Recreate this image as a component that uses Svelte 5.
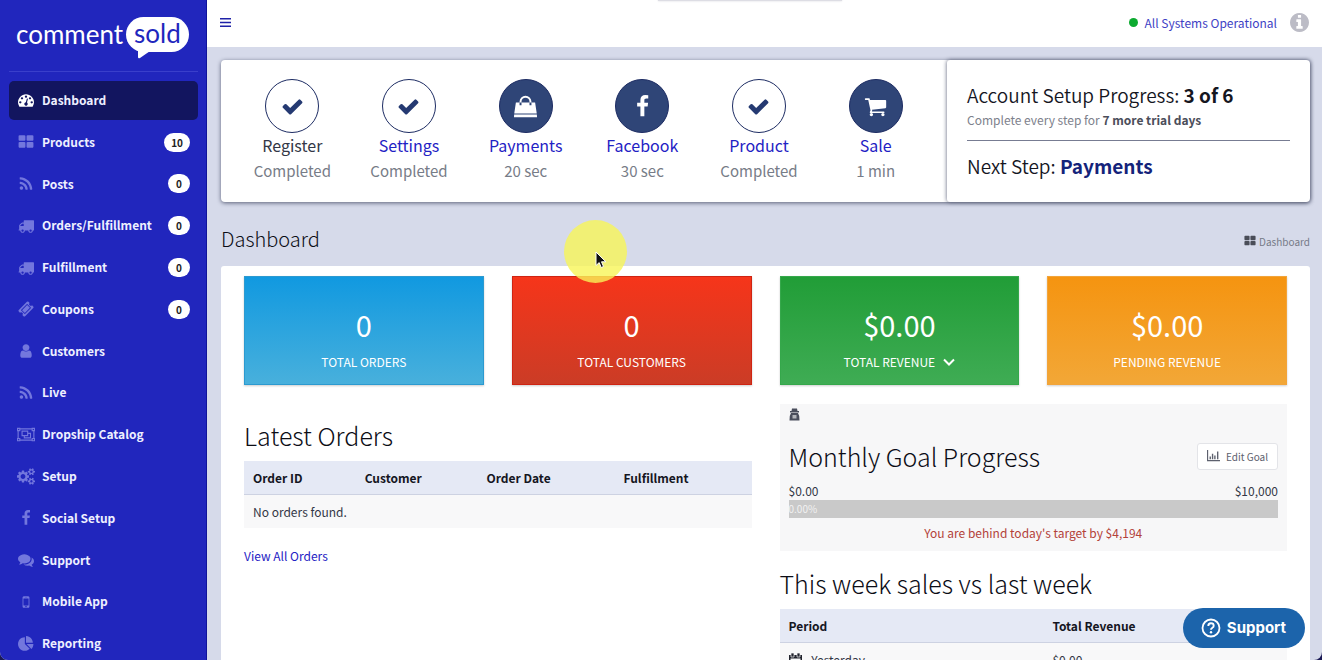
<script>
  const thLarge =
    'M832 1024v384q0 52-38 90t-90 38h-512q-52 0-90-38t-38-90v-384q0-52 38-90t90-38h512q52 0 90 38t38 90zm0-768v384q0 52-38 90t-90 38h-512q-52 0-90-38t-38-90v-384q0-52 38-90t90-38h512q52 0 90 38t38 90zm896 768v384q0 52-38 90t-90 38h-512q-52 0-90-38t-38-90v-384q0-52 38-90t90-38h512q52 0 90 38t38 90zm0-768v384q0 52-38 90t-90 38h-512q-52 0-90-38t-38-90v-384q0-52 38-90t90-38h512q52 0 90 38t38 90z';
  const rss =
    'M576 1344q0 80-56 136t-136 56-136-56-56-136 56-136 136-56 136 56 56 136zm512 123q2 28-17 48-18 21-47 21h-135q-25 0-43-16.5t-20-41.5q-22-229-184.5-391.5t-391.5-184.5q-25-2-41.5-20t-16.5-43v-135q0-29 21-47 17-17 43-17h5q160 13 306 80.5t259 181.5q114 113 181.5 259t80.5 306zm512 2q2 27-18 47-18 20-46 20h-143q-26 0-44.5-17.5t-19.5-42.5q-12-215-101-408.5t-231.5-336-336-231.5-408.5-102q-25-1-42.5-19.5t-17.5-43.5v-143q0-28 20-46 18-18 44-18h3q262 13 501.5 120t425.5 294q187 186 294 425.5t120 501.5z';
  const truck =
    'M640 1408q0-52-38-90t-90-38-90 38-38 90 38 90 90 38 90-38 38-90zm-384-512h384v-256h-158q-13 0-22 9l-195 195q-9 9-9 22v30zm1280 512q0-52-38-90t-90-38-90 38-38 90 38 90 90 38 90-38 38-90zm256-1088v1024q0 15-4 26.5t-13.5 18.5-16.5 11.5-23.5 6-22.5 2-25.5 0-22.5-.5q0 106-75 181t-181 75-181-75-75-181h-384q0 106-75 181t-181 75-181-75-75-181h-64q-3 0-22.5.5t-25.5 0-22.5-2-23.5-6-16.5-11.5-13.5-18.5-4-26.5q0-26 19-45t45-19v-320q0-8-.5-35t0-38 2.5-34.5 6.5-37 14-30.5 22.5-30l198-198q19-19 50.5-32t58.5-13h160v-192q0-26 19-45t45-19h1024q26 0 45 19t19 45z';
  const gauge =
    'M384 1152q0-53-37.5-90.5t-90.5-37.5-90.5 37.5-37.5 90.5 37.5 90.5 90.5 37.5 90.5-37.5 37.5-90.5zm192-448q0-53-37.5-90.5t-90.5-37.5-90.5 37.5-37.5 90.5 37.5 90.5 90.5 37.5 90.5-37.5 37.5-90.5zm428 481l101-382q6-26-7.5-48.5t-38.5-29.5-48 6.5-30 39.5l-101 382q-60 5-107 43.5t-63 98.5q-20 77 20 146t117 89 146-20 89-117q16-60-6-117t-72-91zm660-33q0-53-37.5-90.5t-90.5-37.5-90.5 37.5-37.5 90.5 37.5 90.5 90.5 37.5 90.5-37.5 37.5-90.5zm-640-640q0-53-37.5-90.5t-90.5-37.5-90.5 37.5-37.5 90.5 37.5 90.5 90.5 37.5 90.5-37.5 37.5-90.5zm448 192q0-53-37.5-90.5t-90.5-37.5-90.5 37.5-37.5 90.5 37.5 90.5 90.5 37.5 90.5-37.5 37.5-90.5zm320 448q0 261-141 483-19 29-54 29h-1402q-35 0-54-29-141-221-141-483 0-182 71-348t191-286 286-191 348-71 348 71 286 191 191 286 71 348z';
  const ticket =
    'M1024 452l316 316-572 572-316-316zm-211 979l618-618q19-19 19-45t-19-45l-362-362q-18-18-45-18t-45 18l-618 618q-19 19-19 45t19 45l362 362q18 18 45 18t45-18zm889-637l-907 908q-37 37-90.5 37t-90.5-37l-126-126q56-56 56-136t-56-136-136-56-136 56l-125-126q-37-37-37-90.5t37-90.5l907-906q37-37 90.5-37t90.5 37l125 125q-56 56-56 136t56 136 136 56 136-56l126 125q37 37 37 90.5t-37 90.5z';
  const user =
    'M1536 1399q0 109-62.5 187t-150.5 78h-854q-88 0-150.5-78t-62.5-187q0-85 8.5-160.5t31.5-152 58.5-131 94-89 134.5-34.5q131 128 313 128t313-128q76 0 134.5 34.5t94 89 58.5 131 31.5 152 8.5 160.5zm-256-887q0 159-112.5 271.5t-271.5 112.5-271.5-112.5-112.5-271.5 112.5-271.5 271.5-112.5 271.5 112.5 112.5 271.5z';
  const cogs =
    'M896 896q0-106-75-181t-181-75-181 75-75 181 75 181 181 75 181-75 75-181zm768 512q0-52-38-90t-90-38-90 38-38 90q0 53 37.5 90.5t90.5 37.5 90.5-37.5 37.5-90.5zm0-1024q0-52-38-90t-90-38-90 38-38 90q0 53 37.5 90.5t90.5 37.5 90.5-37.5 37.5-90.5zm-384 421v185q0 10-7 19.5t-16 10.5l-155 24q-11 35-32 76 34 48 90 115 7 11 7 20 0 12-7 19-23 30-82.5 89.5t-78.5 59.5q-11 0-21-7l-115-90q-37 19-77 31-11 108-23 155-7 24-30 24h-186q-11 0-20-7.5t-10-17.5l-23-153q-34-10-75-31l-118 89q-7 7-20 7-11 0-21-8-144-133-144-160 0-9 7-19 10-14 41-53t47-61q-23-44-35-82l-152-24q-10-1-17-9.5t-7-19.5v-185q0-10 7-19.5t16-10.5l155-24q11-35 32-76-34-48-90-115-7-11-7-20 0-12 7-20 22-30 82-89t79-59q11 0 21 7l115 90q34-18 77-32 11-108 23-154 7-24 30-24h186q11 0 20 7.5t10 17.5l23 153q34 10 75 31l118-89q8-7 20-7 11 0 21 8 144 133 144 160 0 8-7 19-12 16-42 54t-45 60q23 48 34 82l152 23q10 2 17 10.5t7 19.5zm640 533v140q0 16-149 31-12 27-30 52 51 113 51 138 0 4-4 7-122 71-124 71-8 0-46-47t-52-68q-20 2-30 2t-30-2q-14 21-52 68t-46 47q-2 0-124-71-4-3-4-7 0-25 51-138-18-25-30-52-149-15-149-31v-140q0-16 149-31 13-29 30-52-51-113-51-138 0-4 4-7 4-2 35-20t59-34 30-16q8 0 46 46.5t52 67.5q20-2 30-2t30 2q51-71 92-112l6-2q4 0 124 70 4 3 4 7 0 25-51 138 17 23 30 52 149 15 149 31zm0-1024v140q0 16-149 31-12 27-30 52 51 113 51 138 0 4-4 7-122 71-124 71-8 0-46-47t-52-68q-20 2-30 2t-30-2q-14 21-52 68t-46 47q-2 0-124-71-4-3-4-7 0-25 51-138-18-25-30-52-149-15-149-31v-140q0-16 149-31 13-29 30-52-51-113-51-138 0-4 4-7 4-2 35-20t59-34 30-16q8 0 46 46.5t52 67.5q20-2 30-2t30 2q51-71 92-112l6-2q4 0 124 70 4 3 4 7 0 25-51 138 17 23 30 52 149 15 149 31z';
  const facebook =
    'M1343 12v264h-157q-86 0-116 36t-30 108v189h293l-39 296h-254v759h-306v-759h-255v-296h255v-218q0-186 104-288.5t277-102.5q147 0 228 12z';
  const comments =
    'M1408 768q0 139-94 257t-256.5 186.5-353.5 68.5q-86 0-176-16-124 88-278 128-36 9-86 16h-3q-11 0-20.5-8t-11.5-21q-1-3-1-6.5t.5-6.5 2-6l2.5-5 3.5-5.5 4-5 4.5-5 4-4.5q5-6 23-25t26-29.5 22.5-29 25-38.5 20.5-44q-124-72-195-177t-71-224q0-139 94-257t256.5-186.5 353.5-68.5 353.5 68.5 256.5 186.5 94 257zm384 256q0 120-71 224.5t-195 176.5q10 24 20.5 44t25 38.5 22.5 29 26 29.5 23 25q1 1 4 4.5t4.5 5 4 5 3.5 5.5l2.5 5 2 6 .5 6.5-1 6.5q-3 14-13 22t-22 7q-50-7-86-16-154-40-278-128-90 16-176 16-271 0-472-132 58 4 88 4 161 0 309-45t264-129q125-92 192-212t67-254q0-77-23-152 129 71 204 178t75 230z';
  const mobile =
    'M976 1408q0-33-23.500-56.500t-56.500-23.500-56.500 23.500-23.500 56.500 23.500 56.500 56.500 23.500 56.500-23.500 23.500-56.500zm208-160v-704q0-13-9.500-22.500t-22.500-9.500h-512q-13 0-22.500 9.500t-9.500 22.500v704q0 13 9.500 22.500t22.500 9.500h512q13 0 22.500-9.500t9.500-22.500zm-192-848q0-16-16-16h-160q-16 0-16 16t16 16h160q16 0 16-16zm288-16v1024q0 52-38 90t-90 38h-512q-52 0-90-38t-38-90v-1024q0-52 38-90t90-38h512q52 0 90 38t38 90z';
  const pie =
    'M768 890l546 546q-106 108-247.500 168t-298.500 60q-209 0-385.500-103t-279.500-279.500-103-385.500 103-385.500 279.500-279.500 385.500-103v762zm187 6h773q0 157-60 298.500t-168 247.500zm709-128h-768v-768q209 0 385.500 103t279.500 279.500 103 385.500z';
  const group =
    'M0 128h384v64h1280v-64h384v384h-64v768h64v384h-384v-64h-1280v64h-384v-384h64v-768h-64zM128 256v128h128v-128zM1792 256v128h128v-128zM128 1408v128h128v-128zM1792 1408v128h128v-128zM384 320v192h-192v768h192v192h1280v-192h192v-768h-192v-192zM512 448h768v256h320v640h-832v-256h-256zM640 576v384h512v-384zM1280 832v256h-384v128h576v-384z';
  const check =
    'M1671 566q0 40-28 68l-724 724-136 136q-28 28-68 28t-68-28l-136-136-362-362q-28-28-28-68t28-68l136-136q28-28 68-28t68 28l294 295 656-657q28-28 68-28t68 28l136 136q28 28 28 68z';
  const cart =
    'M704 1536q0 52-38 90t-90 38-90-38-38-90 38-90 90-38 90 38 38 90zm896 0q0 52-38 90t-90 38-90-38-38-90 38-90 90-38 90 38 38 90zm128-1088v512q0 24-16.500 42.500t-40.500 21.500l-1044 122q13 60 13 70 0 16-24 64h920q26 0 45 19t19 45-19 45-45 19h-1024q-26 0-45-19t-19-45q0-11 8-31.500t16-36 21.500-40 15.500-29.500l-177-823h-204q-26 0-45-19t-19-45 19-45 45-19h256q16 0 28.500 6.500t19.500 15.500 13 24.500 8 26 5.500 29.500 4.500 26h1201q26 0 45 19t19 45z';
  const bag =
    'M256 640h1280l110 730h-1500zM140 1430h1512l12 190h-1536zM500 820v-240q0-160 116-278t280-118 280 118 116 278v240h-130v-240q0-110-78-190t-188-80-188 80-78 190v240z';
  const info =
    'M1152 1376v-160q0-14-9-23t-23-9h-96v-512q0-14-9-23t-23-9h-320q-14 0-23 9t-9 23v160q0 14 9 23t23 9h96v320h-96q-14 0-23 9t-9 23v160q0 14 9 23t23 9h448q14 0 23-9t9-23zm-128-896v-160q0-14-9-23t-23-9h-192q-14 0-23 9t-9 23v160q0 14 9 23t23 9h192q14 0 23-9t9-23zm640 416q0 209-103 385.500t-279.500 279.500-385.500 103-385.500-103-279.500-279.500-103-385.500 103-385.500 279.500-279.500 385.500-103 385.500 103 279.500 279.500 103 385.500z';

  const nav = [
    { label: 'Dashboard', icon: gauge, active: true },
    { label: 'Products', icon: thLarge, count: 10 },
    { label: 'Posts', icon: rss, count: 0 },
    { label: 'Orders/Fulfillment', icon: truck, count: 0 },
    { label: 'Fulfillment', icon: truck, count: 0 },
    { label: 'Coupons', icon: ticket, count: 0 },
    { label: 'Customers', icon: user },
    { label: 'Live', icon: rss },
    { label: 'Dropship Catalog', icon: group, box: '0 0 2048 1792', wide: true },
    { label: 'Setup', icon: cogs, box: '0 0 1920 1792', wide: true },
    { label: 'Social Setup', icon: facebook },
    { label: 'Support', icon: comments },
    { label: 'Mobile App', icon: mobile },
    { label: 'Reporting', icon: pie }
  ];

  const steps = [
    { name: 'Register', note: 'Completed', icon: check, done: true, plain: true },
    { name: 'Settings', note: 'Completed', icon: check, done: true },
    { name: 'Payments', note: '20 sec', icon: bag, box: '130 160 1532 1480' },
    { name: 'Facebook', note: '30 sec', icon: facebook },
    { name: 'Product', note: 'Completed', icon: check, done: true },
    { name: 'Sale', note: '1 min', icon: cart }
  ];

  const stats = [
    { value: '0', label: 'TOTAL ORDERS', tone: 'blue' },
    { value: '0', label: 'TOTAL CUSTOMERS', tone: 'red' },
    { value: '$0.00', label: 'TOTAL REVENUE', tone: 'green', menu: true },
    { value: '$0.00', label: 'PENDING REVENUE', tone: 'orange' }
  ];
</script>

{#snippet icon(path, box = '0 0 1792 1792')}
  <svg viewBox={box} fill="currentColor" fill-rule="evenodd" aria-hidden="true"><path d={path} /></svg>
{/snippet}

<div class="app">
  <aside>
    <a class="logo" href="#home">
      <span>comment</span>
      <span class="bubble">sold
        <svg viewBox="0 0 16 10" aria-hidden="true"><path d="M1 0v8q0 2 2 1L16 0z" fill="#fff" /></svg>
      </span>
    </a>
    <nav>
      {#each nav as item}
        <a href="#nav" class:active={item.active}>
          <span class="ico" class:wide={item.wide}>{@render icon(item.icon, item.box)}</span>
          <span class="label">{item.label}</span>
          {#if item.count !== undefined}<span class="count">{item.count}</span>{/if}
        </a>
      {/each}
    </nav>
  </aside>

  <div class="page">
    <header>
      <button class="burger" aria-label="Menu">
        <svg viewBox="0 0 11 9" aria-hidden="true"><path d="M0 .75h11M0 4.500h11M0 8.250h11" stroke="currentColor" stroke-width="1.500" /></svg>
      </button>
      <a class="status" href="#status"><i></i>All Systems Operational</a>
      <button class="info" aria-label="Information">{@render icon(info, '128 128 1536 1536')}</button>
    </header>

    <main>
      <section class="setup">
        <ol>
          {#each steps as step}
            <li>
              <span class="disc" class:done={step.done}>{@render icon(step.icon, step.box)}</span>
              {#if step.plain}<span class="name">{step.name}</span>{:else}<a class="name" href="#step">{step.name}</a>{/if}
              <span class="note">{step.note}</span>
            </li>
          {/each}
        </ol>
        <div class="progress">
          <p class="big">Account Setup Progress: <b>3 of 6</b></p>
          <p class="small">Complete every step for <b>7 more trial days</b></p>
          <hr />
          <p class="big">Next Step: <a href="#payments">Payments</a></p>
        </div>
      </section>

      <div class="heading">
        <h1>Dashboard</h1>
        <span class="crumb">{@render icon(thLarge)}Dashboard</span>
      </div>

      <section class="panel">
        <div class="stats">
          {#each stats as stat}
            <div class="stat {stat.tone}">
              <strong>{stat.value}</strong>
              {#if stat.menu}
                <button>{stat.label}<svg viewBox="0 0 12 8" aria-hidden="true"><path d="M1 1.500l5 5 5-5" fill="none" stroke="currentColor" stroke-width="2" /></svg></button>
              {:else}
                <span>{stat.label}</span>
              {/if}
            </div>
          {/each}
        </div>

        <div class="columns">
          <div class="orders">
            <h2>Latest Orders</h2>
            <table>
              <colgroup><col class="c1" /><col class="c2" /><col class="c3" /><col class="c4" /></colgroup>
              <thead><tr><th>Order ID</th><th>Customer</th><th>Order Date</th><th>Fulfillment</th></tr></thead>
              <tbody><tr><td colspan="4">No orders found.</td></tr></tbody>
            </table>
            <a class="all" href="#orders">View All Orders</a>
          </div>

          <div>
            <div class="goal">
              <svg class="purse" viewBox="0 0 11 13" aria-hidden="true">
                <path d="M3 .5h5l.5 2.500h1.500v1.500h-9v-1.500h1.500zM2 5h7q2 3 1.500 7.500h-10q-.5-4.500 1.500-7.500z" fill="#4a4e5c" />
                <path d="M3.500 7h4v3.500h-4z" fill="#b3b5ba" />
              </svg>
              <div class="goal-head">
                <h2>Monthly Goal Progress</h2>
                <button>
                  <svg viewBox="0 0 14 12" aria-hidden="true"><path d="M.5 0v11.500h13.500M3.500 10v-3M6 10v-6M8.500 10v-4M11.500 10v-8.500" fill="none" stroke="currentColor" stroke-width="1.500" /></svg>
                  Edit Goal
                </button>
              </div>
              <div class="range"><span>$0.00</span><span>$10,000</span></div>
              <div class="bar">0.00%</div>
              <p><span>You are behind today's target by $4,194</span></p>
            </div>
            <h2 class="week">This week sales vs last week</h2>
            <table class="sales">
              <colgroup><col class="period" /><col /></colgroup>
              <thead><tr><th>Period</th><th>Total Revenue</th></tr></thead>
              <tbody>
                <tr>
                  <td>
                    <svg viewBox="0 0 13 14" aria-hidden="true">
                      <path d="M0 2h13v12h-13z" fill="#22242e" />
                      <path d="M2 0h3v4h-3zM8 0h3v4h-3z" fill="#22242e" stroke="#f8f8f9" stroke-width=".7" />
                      <path d="M1.500 5.500h10v7h-10z" fill="#f8f8f9" />
                    </svg>
                    Yesterday
                  </td>
                  <td>$0.00</td>
                </tr>
              </tbody>
            </table>
          </div>
        </div>
      </section>
    </main>
  </div>

  <button class="support">
    <svg viewBox="0 0 20 20" aria-hidden="true">
      <circle cx="10" cy="10" r="8.500" fill="none" stroke="#fff" stroke-width="1.800" />
      <path d="M7.300 8q0-2.700 2.700-2.700t2.700 2.400q0 1.300-1.400 2.100-1.300.7-1.300 1.900" fill="none" stroke="#fff" stroke-width="1.900" />
      <circle cx="10" cy="14.200" r="1.200" fill="#fff" />
    </svg>
    Support
  </button>
  <div class="tab"></div>
  <div class="pointer">
    <svg viewBox="0 0 12 18" aria-hidden="true"><path d="M1 1v13.500l3.200-2.900 2 4.900 2.300-1-2-4.700h4.400z" fill="#111" stroke="#fff" /></svg>
  </div>
</div>

<style>
  :global(body) {
    margin: 0;
    background: #1b1a55;
  }
  .app {
    position: relative;
    display: flex;
    height: 100vh;
    overflow: hidden;
    border-radius: 0 0 8px 8px;
    background: #d6daea;
    font-family: "Noto Sans CJK SC", "Noto Sans", sans-serif;
    font-size: 12px;
    color: #333746;
  }
  * {
    box-sizing: border-box;
  }
  p, h1, h2, ol {
    margin: 0;
    padding: 0;
  }
  h1, h2 {
    font-weight: 300;
    color: #0c0d16;
  }
  a {
    color: #1f22c4;
    text-decoration: none;
  }
  button {
    border: 0;
    padding: 0;
    background: none;
    font: inherit;
    color: inherit;
    cursor: pointer;
  }
  svg {
    display: block;
    flex: none;
  }

  aside {
    flex: none;
    width: 207px;
    padding: 0 8px 0 9px;
    background: #2126bd;
    border-right: 1px solid #10139a;
  }
  .logo {
    display: flex;
    align-items: center;
    height: 72px;
    padding: 0 0 3px 7px;
    border-bottom: 1px solid #3a3fcb;
    color: #fff;
    font-family: Lato, sans-serif;
    font-size: 26px;
    line-height: 32px;
  }
  .bubble {
    position: relative;
    height: 35px;
    margin-left: 3px;
    padding: 0 8px;
    border-radius: 18px;
    background: #fff;
    color: #2126bd;
  }
  .bubble svg {
    position: absolute;
    left: 11px;
    top: 32px;
    width: 16px;
  }
  nav {
    display: flex;
    flex-direction: column;
    gap: 3px;
    padding-top: 9px;
  }
  nav a {
    display: flex;
    align-items: center;
    padding: 9px 8px;
    border-radius: 5px;
    color: #eef0ff;
    font-size: 12px;
    font-weight: 700;
    line-height: 1.733;
  }
  nav a.active {
    background: #12155f;
  }
  .ico {
    display: flex;
    justify-content: center;
    width: 18px;
    margin-right: 7px;
    color: #7377dd;
  }
  .active .ico {
    color: #fff;
  }
  .ico svg {
    width: 16px;
    height: 16px;
  }
  .ico.wide svg {
    width: 18px;
    height: 17px;
  }
  .label {
    flex: 1;
  }
  .count {
    min-width: 22px;
    padding: 0 7px;
    border-radius: 10px;
    background: #fff;
    color: #222;
    font-size: 10px;
    line-height: 19px;
    text-align: center;
  }

  .page {
    flex: 1;
    min-width: 0;
  }
  header {
    display: flex;
    align-items: center;
    height: 47px;
    padding: 0 13px 2px;
    background: #fff;
  }
  .burger {
    margin-right: auto;
    color: #1f22a8;
  }
  .burger svg {
    width: 11px;
  }
  .status {
    display: flex;
    align-items: center;
    color: #3e41c4;
  }
  .status i {
    width: 9px;
    height: 9px;
    margin-right: 7px;
    border-radius: 50%;
    background: #0caa30;
  }
  .info {
    margin-left: 13px;
    color: #bcbcc6;
  }
  .info svg {
    width: 19px;
  }

  main {
    padding: 13px 12px 0 14px;
  }
  .setup {
    display: grid;
    grid-template-columns: 2fr 1fr;
    border-radius: 4px;
    background: #fff;
    box-shadow: 0 1px 4px #5a6078;
  }
  ol {
    display: grid;
    grid-template-columns: repeat(6, 1fr);
    padding: 19px 13px;
    list-style: none;
  }
  li {
    display: flex;
    flex-direction: column;
    align-items: center;
    font-size: 16px;
    line-height: 25px;
  }
  .disc {
    display: grid;
    place-items: center;
    width: 54px;
    height: 54px;
    border: 1px solid #1d2c63;
    border-radius: 50%;
    background: #2f4577;
    color: #fff;
  }
  .disc.done {
    background: #fff;
    color: #253a72;
  }
  .disc svg {
    width: 23px;
    height: 23px;
  }
  .note {
    color: #777c87;
    font-size: 15px;
  }
  .progress {
    padding: 21px 20px;
    border-radius: 3px;
    box-shadow: 0 0 4px #5a6078;
    color: #15161f;
  }
  .big {
    font-size: 19px;
    font-weight: 350;
    line-height: 28px;
  }
  .big a {
    color: #14237a;
    font-weight: 700;
  }
  .small {
    color: #7d818c;
    line-height: 21px;
  }
  .small b {
    color: #4b4e5a;
  }
  hr {
    margin: 10px 0 11px;
    border: 0;
    border-top: 1px solid #777c92;
  }

  .heading {
    display: flex;
    align-items: center;
    justify-content: space-between;
    height: 64px;
    padding-top: 14px;
  }
  h1 {
    padding-bottom: 5px;
    font-size: 20px;
    line-height: 30px;
  }
  .crumb {
    display: flex;
    align-items: center;
    gap: 3px;
    font-size: 10px;
    color: #777b88;
  }
  .crumb svg {
    width: 12px;
    color: #4a4d58;
  }

  .panel {
    padding: 10px 23px 0;
    border-radius: 3px 3px 0 0;
    background: #fff;
  }
  .stats {
    display: grid;
    grid-template-columns: repeat(4, 1fr);
    gap: 28px;
  }
  .stat {
    display: flex;
    flex-direction: column;
    align-items: center;
    height: 109px;
    padding-top: 29px;
    border: 1px solid;
    box-shadow: 0 1px 2px #0003;
    color: #fff;
    font-size: 12px;
    line-height: 20px;
  }
  .stat strong {
    margin-bottom: 10px;
    font-size: 29px;
    font-weight: 400;
    line-height: 36px;
  }
  .stat button {
    display: flex;
    align-items: center;
    gap: 8px;
  }
  .stat button svg {
    width: 12px;
  }
  .blue {
    background: linear-gradient(#1199e0, #48b0dc);
    border-color: #2c9ad0;
  }
  .red {
    background: linear-gradient(#f6351a, #cb3c26);
    border-color: #cf2412;
  }
  .green {
    background: linear-gradient(#219d37, #3fac54);
    border-color: #35a84b;
  }
  .orange {
    background: linear-gradient(#f59410, #f2a737);
    border-color: #f2a43a;
  }

  .columns {
    display: grid;
    grid-template-columns: 1fr 1fr;
    gap: 28px;
    padding-top: 19px;
  }
  h2 {
    font-size: 25px;
    line-height: 34px;
  }
  .orders h2 {
    margin: 14px 0 9px;
  }
  table {
    width: 100%;
    border-collapse: collapse;
    table-layout: fixed;
    background: #f8f8f9;
    line-height: 18px;
  }
  .c1 { width: 22%; }
  .c2 { width: 24%; }
  .c3 { width: 27%; }
  .c4 { width: 27%; }
  .period { width: 52%; }
  th, td {
    padding: 8px 9px 7px;
    text-align: left;
  }
  th {
    background: #e5e9f5;
    border-bottom: 1px solid #cdd2e2;
    color: #15161f;
  }
  .all {
    display: inline-block;
    margin-top: 18px;
    line-height: 20px;
  }
  .goal {
    padding: 4px 9px 9px;
    background: #f7f7f8;
  }
  .purse {
    width: 11px;
  }
  .goal-head {
    display: flex;
    align-items: center;
    justify-content: space-between;
    padding: 18px 0 9px;
  }
  .goal-head button {
    display: flex;
    align-items: center;
    gap: 6px;
    padding: 0 9px;
    border: 1px solid #e3e4e8;
    border-radius: 3px;
    background: #fff;
    color: #5d616e;
    font-size: 10px;
    line-height: 25px;
  }
  .goal-head button svg {
    width: 13px;
  }
  .range {
    display: flex;
    justify-content: space-between;
    line-height: 18px;
  }
  .bar {
    background: #c9c9c9;
    color: #f1f1f1;
    font-size: 10px;
    line-height: 18px;
  }
  .goal p {
    padding-top: 6px;
    text-align: center;
    color: #b3423a;
    line-height: 18px;
  }
  .week {
    margin: 15px 0 9px;
  }
  .sales td svg {
    display: inline-block;
    width: 13px;
    margin-right: 7px;
    vertical-align: -2px;
  }

  .support {
    position: absolute;
    right: 17px;
    bottom: 12px;
    display: flex;
    align-items: center;
    gap: 6px;
    padding: 0 19px 0 18px;
    border-radius: 21px;
    background: #1c64ab;
    color: #fff;
    font: 700 15px/40px Inter, sans-serif;
  }
  .support svg {
    width: 20px;
  }
  .tab {
    position: absolute;
    left: 658px;
    top: 0;
    width: 184px;
    height: 1px;
    background: #dddde4;
    box-shadow: 0 0 2px #c8c8d0;
  }
  .pointer {
    position: absolute;
    left: 564px;
    top: 220px;
    width: 63px;
    height: 63px;
    padding: 31px 0 0 31px;
    border-radius: 50%;
    background: #f8f557cc;
  }
  .pointer svg {
    width: 12px;
  }
</style>
